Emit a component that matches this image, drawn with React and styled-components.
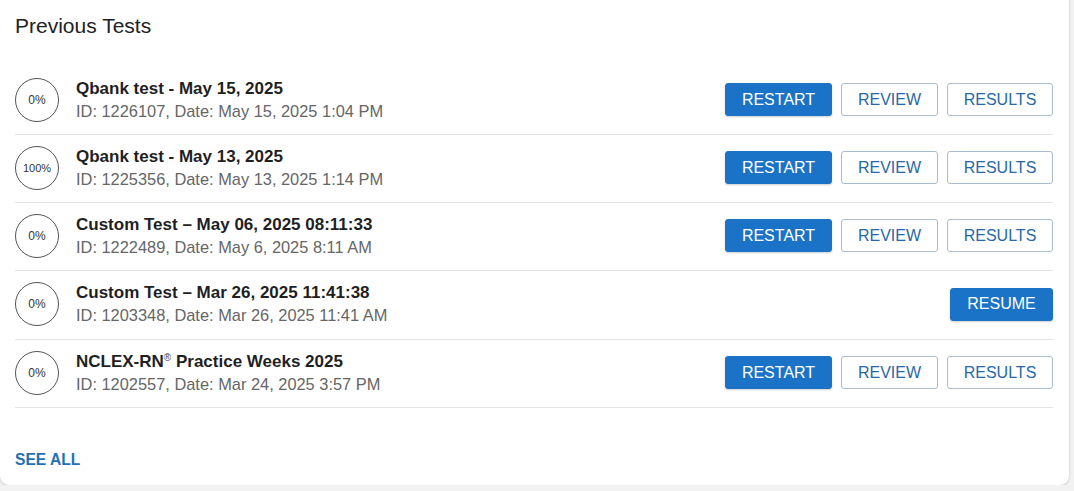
import React from "react";
import styled, { createGlobalStyle } from "styled-components";

const GlobalStyle = createGlobalStyle`
  body {
    margin: 0;
    background: #f2f2f2;
    font-family: "Liberation Sans", Arial, sans-serif;
  }
`;

const Card = styled.section`
  width: 1069px;
  height: 493px;
  margin-top: -8px;
  box-sizing: border-box;
  background: #fff;
  border-radius: 9px;
  box-shadow: 0 1px 3px rgba(0, 0, 0, 0.18);
  padding: 22px 16px 0 15px;
  display: flex;
  flex-direction: column;
`;

const Title = styled.h2`
  margin: 0;
  font-size: 21px;
  line-height: 24px;
  font-weight: 400;
  color: #222;
`;

const List = styled.div`
  margin-top: 29px;
  display: flex;
  flex-direction: column;
`;

const Row = styled.div`
  height: ${(p) => (p.$tall ? 69 : 68)}px;
  box-sizing: border-box;
  border-bottom: 1px solid #e3e3e3;
  display: flex;
  align-items: center;
  padding-bottom: 2px;
`;

const Score = styled.div`
  width: 42px;
  height: 42px;
  border: 1px solid #555;
  border-radius: 50%;
  display: flex;
  align-items: center;
  justify-content: center;
  font-size: ${(p) => (p.$small ? "11px" : "12px")};
  color: #333;
  flex-shrink: 0;
`;

const Info = styled.div`
  margin-left: 17px;
  display: flex;
  flex-direction: column;
  flex: 1;
`;

const Name = styled.div`
  font-size: 17px;
  line-height: 22px;
  font-weight: 700;
  color: #1f1f1f;

  sup {
    font-size: 10px;
    font-weight: 400;
    vertical-align: 6px;
    line-height: 0;
    color: #444;
  }
`;

const Meta = styled.div`
  font-size: 16.4px;
  line-height: 22px;
  color: #666;
`;

const Actions = styled.div`
  display: flex;
  gap: 9px;
`;

const Button = styled.button`
  height: 33px;
  min-width: ${(p) => p.$w}px;
  box-sizing: border-box;
  border-radius: 3px;
  font-family: inherit;
  font-size: 16px;
  padding: 0 12px;
  cursor: pointer;
  background: ${(p) => (p.$primary ? "#1a73c6" : "#fff")};
  color: ${(p) => (p.$primary ? "#fff" : "#2668a8")};
  border: 1px solid ${(p) => (p.$primary ? "#1a73c6" : "#a9bccf")};
  box-shadow: ${(p) => (p.$primary ? "0 1px 2px rgba(0,0,0,0.2)" : "none")};
`;

const SeeAll = styled.a`
  margin-top: 43px;
  font-size: 15.6px;
  font-weight: 700;
  color: #2470b3;
  text-decoration: none;
  line-height: 18px;
`;

const tests = [
  { score: "0%", name: "Qbank test - May 15, 2025", meta: "ID: 1226107, Date: May 15, 2025 1:04 PM" },
  { score: "100%", name: "Qbank test - May 13, 2025", meta: "ID: 1225356, Date: May 13, 2025 1:14 PM" },
  { score: "0%", name: "Custom Test – May 06, 2025 08:11:33", meta: "ID: 1222489, Date: May 6, 2025 8:11 AM" },
  { score: "0%", name: "Custom Test – Mar 26, 2025 11:41:38", meta: "ID: 1203348, Date: Mar 26, 2025 11:41 AM", resume: true, tall: true },
  { score: "0%", name: "NCLEX-RN", reg: true, rest: " Practice Weeks 2025", meta: "ID: 1202557, Date: Mar 24, 2025 3:57 PM" },
];

export default function App() {
  return (
    <>
      <GlobalStyle />
      <Card>
        <Title>Previous Tests</Title>
        <List>
          {tests.map((t) => (
            <Row key={t.meta} $tall={t.tall}>
              <Score $small={t.score.length > 3}>{t.score}</Score>
              <Info>
                <Name>
                  {t.name}
                  {t.reg && <sup>®</sup>}
                  {t.rest}
                </Name>
                <Meta>{t.meta}</Meta>
              </Info>
              {t.resume ? (
                <Actions>
                  <Button $primary $w={103}>RESUME</Button>
                </Actions>
              ) : (
                <Actions>
                  <Button $primary $w={107}>RESTART</Button>
                  <Button $w={97}>REVIEW</Button>
                  <Button $w={106}>RESULTS</Button>
                </Actions>
              )}
            </Row>
          ))}
        </List>
        <SeeAll href="#">SEE ALL</SeeAll>
      </Card>
    </>
  );
}
